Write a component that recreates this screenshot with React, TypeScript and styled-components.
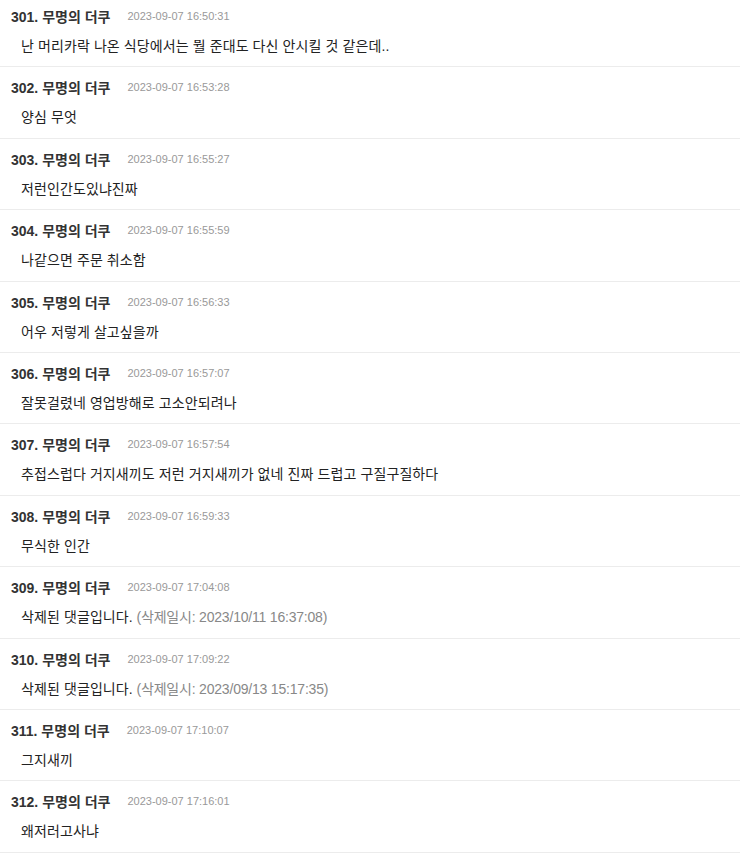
import React from "react";
import styled, { createGlobalStyle } from "styled-components";

const Global = createGlobalStyle`
  html, body { margin: 0; padding: 0; background: #fff; }
  body { font-family: "Liberation Sans", "Noto Sans CJK KR", sans-serif; }
`;

const List = styled.ul`
  list-style: none;
  margin: -4px 0 0;
  padding: 0;
`;

const Row = styled.li`
  padding: 10px 11px 10.4px;
  border-bottom: 1px solid #ececec;
`;

const Header = styled.div`
  display: flex;
  align-items: center;
  height: 20px;
`;

const Name = styled.span`
  font-size: 14px;
  font-weight: bold;
  color: #333;
`;

const Time = styled.span`
  margin-left: 17px;
  font-size: 11px;
  color: #999;
`;

const Body = styled.div`
  margin-top: 10px;
  padding-left: 10px;
  height: 20px;
  line-height: 20px;
  font-size: 14px;
  color: #222;
  letter-spacing: 0.1px;
`;

const Deleted = styled.span`
  color: #888;
  letter-spacing: -0.2px;
`;

type Item = { n: number; time: string; text: string; del?: string };

const items: Item[] = [
  { n: 301, time: "2023-09-07 16:50:31", text: "난 머리카락 나온 식당에서는 뭘 준대도 다신 안시킬 것 같은데.." },
  { n: 302, time: "2023-09-07 16:53:28", text: "양심 무엇" },
  { n: 303, time: "2023-09-07 16:55:27", text: "저런인간도있냐진짜" },
  { n: 304, time: "2023-09-07 16:55:59", text: "나같으면 주문 취소함" },
  { n: 305, time: "2023-09-07 16:56:33", text: "어우 저렇게 살고싶을까" },
  { n: 306, time: "2023-09-07 16:57:07", text: "잘못걸렸네 영업방해로 고소안되려나" },
  { n: 307, time: "2023-09-07 16:57:54", text: "추접스럽다 거지새끼도 저런 거지새끼가 없네 진짜 드럽고 구질구질하다" },
  { n: 308, time: "2023-09-07 16:59:33", text: "무식한 인간" },
  { n: 309, time: "2023-09-07 17:04:08", text: "삭제된 댓글입니다.", del: "(삭제일시: 2023/10/11 16:37:08)" },
  { n: 310, time: "2023-09-07 17:09:22", text: "삭제된 댓글입니다.", del: "(삭제일시: 2023/09/13 15:17:35)" },
  { n: 311, time: "2023-09-07 17:10:07", text: "그지새끼" },
  { n: 312, time: "2023-09-07 17:16:01", text: "왜저러고사냐" },
];

export default function App() {
  return (
    <>
      <Global />
      <List>
        {items.map((it) => (
          <Row key={it.n}>
            <Header>
              <Name>{it.n}. 무명의 더쿠</Name>
              <Time>{it.time}</Time>
            </Header>
            <Body>
              {it.text}
              {it.del && <Deleted> {it.del}</Deleted>}
            </Body>
          </Row>
        ))}
      </List>
    </>
  );
}
